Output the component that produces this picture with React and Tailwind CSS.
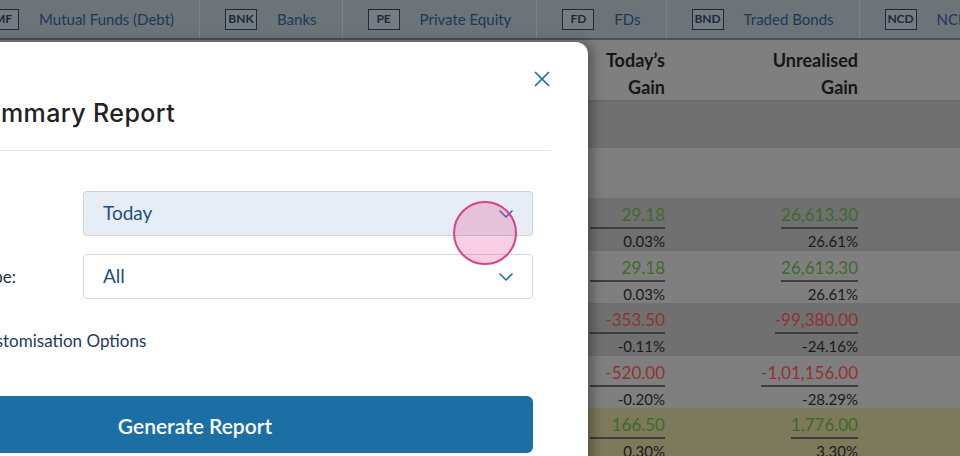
import { X, ChevronDown } from 'lucide-react';

const tabs = [
  { code: 'MF', label: 'Mutual Funds (Debt)' },
  { code: 'BNK', label: 'Banks' },
  { code: 'PE', label: 'Private Equity' },
  { code: 'FD', label: 'FDs' },
  { code: 'BND', label: 'Traded Bonds' },
  { code: 'NCD', label: 'NCDs' },
];

const rows = [
  { today: '29.18', todayPct: '0.03%', gain: '26,613.30', gainPct: '26.61%', up: true, bg: 'bg-[#707070]' },
  { today: '29.18', todayPct: '0.03%', gain: '26,613.30', gainPct: '26.61%', up: true, bg: 'bg-[#7f7f7f]' },
  { today: '-353.50', todayPct: '-0.11%', gain: '-99,380.00', gainPct: '-24.16%', up: false, bg: 'bg-[#707070]' },
  { today: '-520.00', todayPct: '-0.20%', gain: '-1,01,156.00', gainPct: '-28.29%', up: false, bg: 'bg-[#7f7f7f]' },
  { today: '166.50', todayPct: '0.30%', gain: '1,776.00', gainPct: '3.30%', up: true, bg: 'bg-[#7d795b]' },
];

function TopBar() {
  return (
    <div className="flex h-[40px] bg-[#6c7479] border-b-2 border-[#4b5256] ml-[-38px] whitespace-nowrap">
      {tabs.map((t) => (
        <div key={t.code} className="flex items-center gap-5 px-[25px] border-r border-[#7c8387] shrink-0">
          <span className="w-[32px] h-[21px] flex items-center justify-center border-[1.5px] border-[#1b2a3c] bg-[#757d81] text-[12px] font-bold text-[#1b2a3c]">
            {t.code}
          </span>
          <span className="text-[15px] text-[#1e3856]">{t.label}</span>
        </div>
      ))}
    </div>
  );
}

function Table() {
  return (
    <div className="flex flex-col font-['Lato',sans-serif]">
      <div className="flex h-[62px] pt-[8px] bg-[#7f7f7f] border-b-2 border-[#6a6a6a] text-[18px] font-bold text-[#161616] leading-[27px] items-center">
        <div className="flex-1" />
        <div className="w-[100px] text-right">Today’s<br />Gain</div>
        <div className="w-[193px] text-right">Unrealised<br />Gain</div>
        <div className="w-[102px]" />
      </div>
      <div className="h-[46px] bg-[#707070]" />
      <div className="h-[50px] bg-[#7f7f7f]" />
      {rows.map((r, i) => (
        <div key={i} className={`flex h-[52.5px] ${r.bg}`}>
          <div className="flex-1" />
          <div className="w-[100px] flex flex-col items-end">
            <div className={`w-[75px] text-right text-[17px] pt-[4px] h-[31px] border-b-2 border-[#3d3d3d] ${r.up ? 'text-[#3f6a2c]' : 'text-[#913232]'}`}>
              {r.today}
            </div>
            <div className="text-[15px] text-[#1a1a1a] pt-[1px]">{r.todayPct}</div>
          </div>
          <div className="w-[193px] flex flex-col items-end">
            <div className={`text-right text-[17px] pt-[4px] h-[31px] border-b-2 border-[#3d3d3d] ${r.up ? 'text-[#3f6a2c]' : 'text-[#913232]'}`}>
              {r.gain}
            </div>
            <div className="text-[15px] text-[#1a1a1a] pt-[1px]">{r.gainPct}</div>
          </div>
          <div className="w-[102px]" />
        </div>
      ))}
    </div>
  );
}

function Select({ value, active }) {
  return (
    <div className={`relative flex-1 h-[45px] rounded-[4px] border flex items-center pl-[19px] pr-[14px] ${active ? 'bg-[#e6edf4] border-[#cdd4da]' : 'bg-white border-[#d3d7db]'}`}>
      <span className="text-[19px] text-[#1d4f80] flex-1">{value}</span>
      <ChevronDown size={24} strokeWidth={1.6} className="text-[#1f6fa8]" />
    </div>
  );
}

function Modal() {
  return (
    <div className="absolute left-[-180px] top-[42px] w-[768px] h-[440px] bg-white rounded-tr-[12px] shadow-[4px_0_12px_rgba(0,0,0,0.35)] pl-[37px] pr-[37px] font-['Lato',sans-serif]">
      <div className="flex justify-end pt-[24px] h-[48px]">
        <X size={26} strokeWidth={1.6} className="text-[#1b6fa8] -mr-[4px]" />
      </div>
      <div className="h-[61px] border-b border-[#e6e6e6] flex items-start pl-[112px]">
        <h2 className="mt-[5px] text-[25px] font-medium text-[#222] tracking-[0.4px] font-['Inter',sans-serif]">Summary Report</h2>
      </div>
      <div className="pr-[18px]">
        <div className="flex items-center mt-[40px]">
          <span className="w-[226px]" />
          <Select value="Today" active />
        </div>
        <div className="flex items-center mt-[18px]">
          <span className="w-[226px] pl-[119px] text-[17px] text-[#1f2f40]">Type:</span>
          <Select value="All" />
        </div>
        <div className="mt-[29px] pl-[118px] text-[17px] text-[#1f3a5c]">Customisation Options</div>
        <button className="mt-[42px] w-full h-[57px] pt-[3px] rounded-[6px] bg-[#1c6fa5] text-white text-[21px] font-semibold">
          Generate Report
        </button>
      </div>
      <div className="absolute left-[633px] top-[159px] w-[64px] h-[64px] rounded-full border-2 border-[#d9428b] bg-[rgba(231,80,150,0.28)]" />
    </div>
  );
}

export default function App() {
  return (
    <div className="relative w-[960px] h-[456px] overflow-hidden bg-[#7f7f7f] font-['Lato',sans-serif]">
      <TopBar />
      <Table />
      <Modal />
    </div>
  );
}
